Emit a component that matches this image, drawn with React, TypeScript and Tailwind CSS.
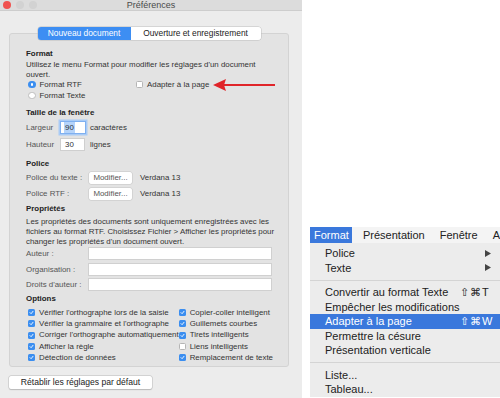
import React from 'react';

const Check: React.FC<{ on?: boolean }> = ({ on = true }) =>
  on ? (
    <span className="w-[7px] h-[7px] rounded-[1.5px] bg-[#3b8ef0] flex items-center justify-center shrink-0">
      <svg width="5" height="5" viewBox="0 0 10 10">
        <path d="M2 5.2 L4.2 7.4 L8 2.6" stroke="white" strokeWidth="1.8" fill="none" strokeLinecap="round" />
      </svg>
    </span>
  ) : (
    <span className="w-[7px] h-[7px] rounded-[1.5px] bg-white border border-[#b5b5b5] shrink-0" />
  );

const Option: React.FC<{ label: string; on?: boolean }> = ({ label, on }) => (
  <div className="h-[11.3px] flex items-center gap-[4px] whitespace-nowrap">
    <Check on={on} />
    <span>{label}</span>
  </div>
);

const MenuItem: React.FC<{ label: string; shortcut?: string; sub?: boolean; active?: boolean }> = ({
  label,
  shortcut,
  sub,
  active,
}) => (
  <div
    className={`h-[14.5px] flex items-center pl-[15px] relative whitespace-nowrap ${active ? 'bg-[#3a78dc] text-white' : 'text-[#222]'}`}
  >
    <span>{label}</span>
    {shortcut && <span className="absolute left-[150px] tracking-[1px]">{shortcut}</span>}
    {sub && (
      <svg className="absolute left-[175px]" width="6" height="7" viewBox="0 0 6 7">
        <path d="M0 0 L6 3.5 L0 7 Z" fill="#444" />
      </svg>
    )}
  </div>
);

const App: React.FC = () => {
  return (
    <div className="w-[500px] h-[398px] flex bg-white overflow-hidden" style={{ fontFamily: '"Liberation Sans", Arial, sans-serif' }}>
      {/* Préférences window */}
      <div className="w-[302px] h-full bg-[#ececec] flex flex-col text-[7.9px] text-[#333] shrink-0">
        <div className="h-[11px] bg-[#dcdcdc] border-b border-[#cdcdcd] flex items-center relative">
          <div className="flex gap-[5px] pl-[3px]">
            <span className="w-[8px] h-[8px] rounded-full bg-[#f0524f]" />
            <span className="w-[8px] h-[8px] rounded-full bg-[#d2d2d2]" />
            <span className="w-[8px] h-[8px] rounded-full bg-[#d2d2d2]" />
          </div>
          <span className="absolute left-0 right-0 text-center text-[9px] text-[#4a4a4a] leading-none">Préférences</span>
        </div>

        <div className="mx-[9px] mt-[22px] w-[280px] h-[334px] bg-[#e3e3e3] border border-[#d3d3d3] rounded-[3px] relative px-[16px]">
          {/* tabs */}
          <div className="absolute left-0 right-0 -top-[7px] flex justify-center">
            <div className="flex h-[13px] text-[8.4px] rounded-[3px] shadow-[0_0_0_0.5px_#bdbdbd] overflow-hidden">
              <span className="w-[93px] bg-[#3d8ef3] text-white flex items-center justify-center">Nouveau document</span>
              <span className="w-[130px] bg-white text-[#222] flex items-center justify-center">Ouverture et enregistrement</span>
            </div>
          </div>

          <div className="pt-[15px] flex flex-col">
            <div className="h-[10px] leading-[10px] font-bold text-[#222]">Format</div>
            <div className="mt-[1px] leading-[9.5px] whitespace-nowrap">
              Utilisez le menu Format pour modifier les réglages d'un document
              <br />
              ouvert.
            </div>
            <div className="h-[11px] flex items-center relative">
              <span className="ml-[2px] w-[7.5px] h-[7.5px] rounded-full bg-[#3b8ef0] flex items-center justify-center">
                <span className="w-[2.5px] h-[2.5px] rounded-full bg-white" />
              </span>
              <span className="ml-[4px]">Format RTF</span>
              <div className="absolute left-[110px] flex items-center gap-[4px] whitespace-nowrap">
                <Check on={false} />
                <span>Adapter à la page</span>
              </div>
            </div>
            <div className="h-[11px] flex items-center">
              <span className="ml-[2px] w-[7.5px] h-[7.5px] rounded-full bg-white border border-[#bdbdbd]" />
              <span className="ml-[4px]">Format Texte</span>
            </div>

            <div className="mt-[7px] h-[10px] leading-[10px] font-bold text-[#222]">Taille de la fenêtre</div>
            <div className="mt-[3px] h-[13px] flex items-center">
              <span className="w-[34px] text-[#555]">Largeur</span>
              <span className="w-[26px] h-[13px] bg-white border border-[#7fb0f0] shadow-[0_0_0_1.5px_#a9cbf6] flex items-center pl-[3px]">
                <span className="bg-[#b4d3fa] px-[1px]">90</span>
              </span>
              <span className="ml-[4px]">caractères</span>
            </div>
            <div className="mt-[4px] h-[13px] flex items-center">
              <span className="w-[34px] text-[#555]">Hauteur</span>
              <span className="w-[25px] h-[13px] bg-white border border-[#cfcfcf] flex items-center pl-[4px]">30</span>
              <span className="ml-[5px]">lignes</span>
            </div>

            <div className="mt-[8px] h-[10px] leading-[10px] font-bold text-[#222]">Police</div>
            <div className="mt-[3px] h-[12px] flex items-center">
              <span className="w-[63px] text-[#555]">Police du texte :</span>
              <span className="w-[43px] h-[12px] bg-white rounded-[2px] shadow-[0_0_0_0.5px_#c4c4c4] flex items-center justify-center text-[#555]">Modifier...</span>
              <span className="ml-[8px]">Verdana 13</span>
            </div>
            <div className="mt-[4px] h-[12px] flex items-center">
              <span className="w-[63px] text-[#555]">Police RTF :</span>
              <span className="w-[43px] h-[12px] bg-white rounded-[2px] shadow-[0_0_0_0.5px_#c4c4c4] flex items-center justify-center text-[#555]">Modifier...</span>
              <span className="ml-[8px]">Verdana 13</span>
            </div>

            <div className="mt-[4px] h-[10px] leading-[10px] font-bold text-[#222]">Propriétés</div>
            <div className="mt-[3px] leading-[10px] whitespace-nowrap">
              Les propriétés des documents sont uniquement enregistrées avec les
              <br />
              fichiers au format RTF. Choisissez Fichier &gt; Afficher les propriétés pour
              <br />
              changer les propriétés d'un document ouvert.
            </div>
            <div className="h-[13px] flex items-center">
              <span className="w-[62px] text-[#555]">Auteur :</span>
              <span className="w-[186px] h-[13px] bg-white border border-[#d0d0d0]" />
            </div>
            <div className="mt-[3px] h-[13px] flex items-center">
              <span className="w-[62px] text-[#555]">Organisation :</span>
              <span className="w-[186px] h-[13px] bg-white border border-[#d0d0d0]" />
            </div>
            <div className="mt-[2px] h-[13px] flex items-center">
              <span className="w-[62px] text-[#555]">Droits d'auteur :</span>
              <span className="w-[186px] h-[13px] bg-white border border-[#d0d0d0]" />
            </div>

            <div className="mt-[3px] h-[10px] leading-[10px] font-bold text-[#222]">Options</div>
            <div className="mt-[3px] flex pl-[2px]">
              <div className="w-[157px] flex flex-col">
                <Option label="Vérifier l'orthographe lors de la saisie" />
                <Option label="Vérifier la grammaire et l'orthographe" />
                <Option label="Corriger l'orthographe automatiquement" />
                <Option label="Afficher la règle" />
                <Option label="Détection de données" />
              </div>
              <div className="flex flex-col">
                <Option label="Copier-coller intelligent" />
                <Option label="Guillemets courbes" />
                <Option label="Tirets intelligents" />
                <Option label="Liens intelligents" on={false} />
                <Option label="Remplacement de texte" />
              </div>
            </div>
          </div>

          {/* red arrow */}
          <svg className="absolute left-[203px] top-[44px]" width="62" height="14" viewBox="0 0 62 14">
            <path d="M10 7 L62 7" stroke="#e0252a" strokeWidth="2.2" />
            <path d="M0 7 L13 1 L11 7 L13 13 Z" fill="#e0252a" />
          </svg>
        </div>

        <div className="ml-[9px] mt-[9px] w-[143px] h-[13px] bg-white rounded-[2px] shadow-[0_0_0_0.5px_#bdbdbd,0_0.5px_1px_#bbb] flex items-center justify-center text-[8.6px] text-[#222]">
          Rétablir les réglages par défaut
        </div>
      </div>

      {/* Format menu */}
      <div className="flex-1 min-w-0 pl-[8px] pt-[227px] text-[11px]">
        <div className="h-[16px] bg-[#f4f4f4] flex items-center text-[#222] whitespace-nowrap">
          <span className="w-[46px] h-full bg-[#3a78dc] text-white flex items-center pl-[4px]">Format</span>
          <span className="ml-[11px]">Présentation</span>
          <span className="ml-[15px]">Fenêtre</span>
          <span className="ml-[15px]">A</span>
        </div>
        <div className="bg-[#ececec] pt-[3px] flex flex-col">
          <MenuItem label="Police" sub />
          <MenuItem label="Texte" sub />
          <div className="h-[10px] flex items-center">
            <div className="w-full h-px bg-[#d4d4d4]" />
          </div>
          <MenuItem label="Convertir au format Texte" shortcut="⇧⌘T" />
          <MenuItem label="Empêcher les modifications" />
          <MenuItem label="Adapter à la page" shortcut="⇧⌘W" active />
          <MenuItem label="Permettre la césure" />
          <MenuItem label="Présentation verticale" />
          <div className="h-[10px] flex items-center">
            <div className="w-full h-px bg-[#d4d4d4]" />
          </div>
          <MenuItem label="Liste..." />
          <MenuItem label="Tableau..." />
        </div>
      </div>
    </div>
  );
};

export default App;
